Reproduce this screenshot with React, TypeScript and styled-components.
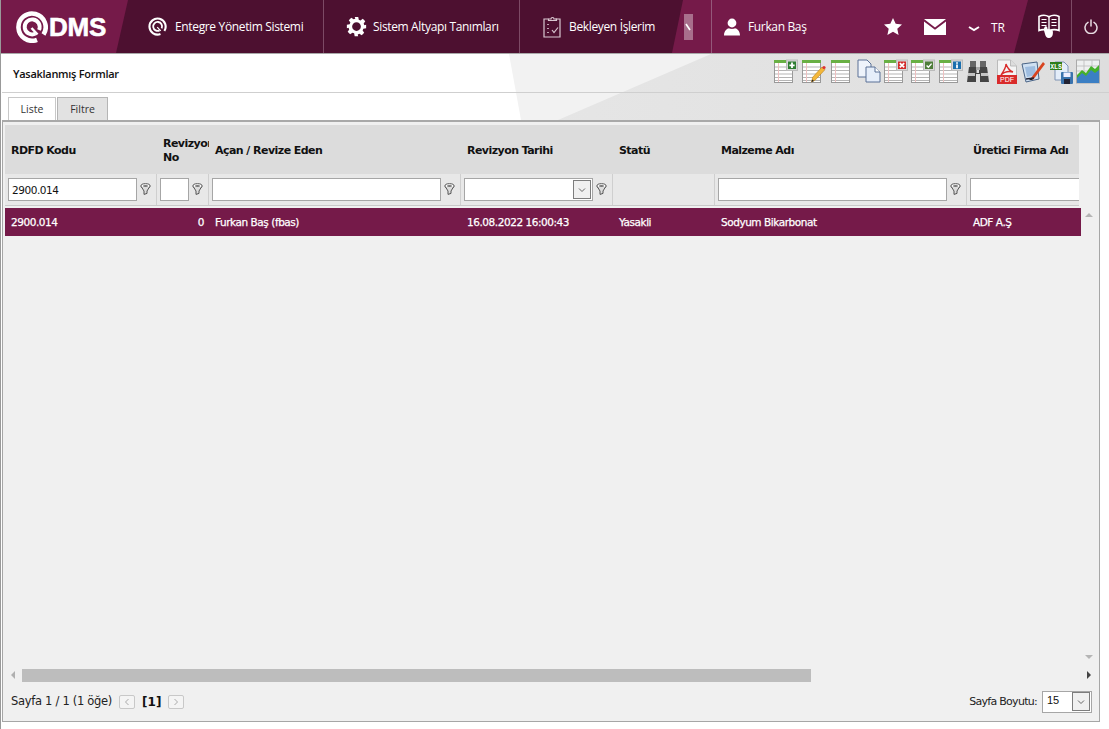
import React from "react";
import styled, { createGlobalStyle } from "styled-components";

const Global = createGlobalStyle`
  html, body { margin: 0; padding: 0; background: #fff; }
  body { width: 1109px; height: 729px; overflow: hidden; font-family: "Open Sans", "Noto Sans", sans-serif; }
  * { box-sizing: border-box; }
`;

const Page = styled.div`
  width: 1109px; height: 729px; display: flex; flex-direction: column;
  background: #fff; border-left: 1px solid #999;
`;

const Header = styled.header`
  height: 54px; flex: none; display: flex; background: #4d1030; border-bottom: 1px solid #a9a9a9;
`;
const LogoBlock = styled.div`
  width: 127px; flex: none; height: 100%; background: #751a49;
  clip-path: polygon(0 0, 100% 0, 115px 100%, 0 100%);
  display: flex; align-items: center; padding-left: 15px; gap: 1px;
`;
const LogoText = styled.span`
  font: 700 26px/1 "Liberation Sans", Arial, sans-serif; color: #fff; letter-spacing: -0.2px; -webkit-text-stroke: 0.6px #fff; margin-top: 1px;
`;
const NavItem = styled.div<{ $w: number; $pad: number; $left: number; $line?: boolean }>`
  width: ${p => p.$w}px; flex: none; height: 100%; display: flex; align-items: center; gap: ${p => p.$pad}px;
  padding-left: ${p => p.$left}px; color: #fff; font-size: 12px; letter-spacing: -0.35px;
  border-right: ${p => (p.$line ? "1px solid #7d4a65" : "none")};
  white-space: nowrap;
`;
const UserBlock = styled.div`
  width: 356px; flex: none; height: 100%; background: #751a49;
  clip-path: polygon(11px 0, 100% 0, 342px 100%, 0 100%);
  display: flex; align-items: center; position: relative;
`;
const Handle = styled.div`
  width: 9px; height: 26px; margin-left: 12px; background: #a86f8c; flex: none; display: flex; align-items: center; justify-content: center; overflow: hidden;
`;
const UserName = styled.div`
  width: 326px; margin-left: 18px; height: 100%; border-left: 1px solid #94587a; display: flex; align-items: center;
  padding-left: 12px; color: #fff; font-size: 12px; letter-spacing: -0.35px; white-space: nowrap;
`;
const NameText = styled.span`margin-left: 8px; width: 136px;`;
const Lang = styled.span`font-size: 12px; margin-left: 11px; margin-top: 2px; letter-spacing: 0;`;
const IconCell = styled.span<{ $ml: number; $mt?: number }>`
  display: inline-flex; margin-left: ${p => p.$ml}px; margin-top: ${p => p.$mt ?? 0}px;
`;
const HelpCell = styled.div`
  width: 44px; flex: none; height: 100%; border-right: 1px solid #7d4a65; display: flex; align-items: center; justify-content: flex-start; padding-left: 10px;
`;
const PowerCell = styled.div`
  flex: 1; height: 100%; display: flex; align-items: center; justify-content: center;
`;

const TopBand = styled.div`
  height: 66px; flex: none; position: relative; overflow: hidden; margin-left: 1px; background: #fff;
  &::before {
    content: ""; position: absolute; inset: 0; background: #f2f2f2;
    clip-path: polygon(507px 0, 100% 0, 100% 100%, 519px 100%);
  }
  &::after {
    content: ""; position: absolute; inset: 0; background: linear-gradient(90deg, #ededed, #dedede);
    clip-path: polygon(709px 0, 100% 0, 100% 100%, 556px 100%);
  }
`;
const TitleBar = styled.div`
  position: relative; z-index: 1; height: 39px; border-bottom: 1px solid #cfcfcf; display: flex; align-items: center; justify-content: space-between;
  padding: 0 9px 0 11px;
`;
const Title = styled.h1`
  margin: 0; font-size: 11px; font-weight: 600; color: #111; letter-spacing: -0.28px;
`;
const Tools = styled.div`
  display: flex; align-items: center; margin-top: -3px;
`;
const Tool = styled.span<{ $ml: number }>`
  display: inline-flex; margin-left: ${p => p.$ml}px;
`;
const Tabs = styled.div`
  position: relative; z-index: 1; height: 27px; display: flex; align-items: flex-end; gap: 1px; padding-left: 6px;
`;
const Tab = styled.div<{ $active?: boolean }>`
  height: 23px; width: ${p => (p.$active ? 48 : 51)}px; display: flex; align-items: center; justify-content: center; font-size: 10.5px; color: #333;
  background: ${p => (p.$active ? "#fff" : "#e2e2e2")}; border: 1px solid ${p => (p.$active ? "#c8c8c8" : "#b5b5b5")}; border-bottom: 0;
`;

const Panel = styled.main`
  width: 1098px; height: 602px; margin-left: 1px; flex: none; background: #f0f0f0; border: 1px solid #a6a6a6; border-top: 2px solid #a9a9a9;
  position: relative; display: flex; flex-direction: column; padding: 3px 0 0 2px;
`;
const GridWrap = styled.div`flex: 1; position: relative; overflow: hidden; min-height: 0;`;
const COLS = "152px 52px 252px 152px 102px 252px 152px";
const HeadRow = styled.div`
  width: 1074px; height: 49px; overflow: hidden; display: grid; grid-template-columns: ${COLS}; background: #dcdcdc;
`;
const HeadCell = styled.div`
  display: flex; align-items: center; padding: 2px 0 0 6px; font: 700 11px/14px "DejaVu Sans", Verdana, sans-serif; letter-spacing: -0.55px; color: #111; overflow: hidden; white-space: pre-line;
`;
const FilterRow = styled.div`
  width: 1074px; height: 32px; overflow: hidden; display: grid; grid-template-columns: ${COLS}; background: #e8e8e8; border-bottom: 1px solid #c9c9c9;
`;
const FilterCell = styled.div`
  display: flex; align-items: center; gap: 3px; padding: 0 3px; border-right: 1px solid #cfcfcf; height: 31px;
`;
const Field = styled.div<{ $w: number }>`
  width: ${p => p.$w}px; flex: none; height: 23px; background: #fff; border: 1px solid #a6a6a6; font: 400 10.5px/21px "DejaVu Sans", sans-serif; letter-spacing: -0.45px; color: #111; padding-left: 3px;
  display: flex; align-items: center; justify-content: flex-end;
`;
const FieldValue = styled.span`flex: 1; padding-top: 2px;`;
const DropBtn = styled.span`
  width: 18px; height: 19px; margin-right: 1px; background: #f0f0f0; border: 1px solid #7d7d7d; display: flex; align-items: center; justify-content: center; flex: none;
`;
const DataRow = styled.div`
  width: 1076px; height: 28px; margin-top: 2px; display: grid; grid-template-columns: ${COLS}; background: #751a49; color: #fff; overflow: hidden;
`;
const DataCell = styled.div<{ $right?: boolean }>`
  display: flex; align-items: center; justify-content: ${p => (p.$right ? "flex-end" : "flex-start")}; padding: 0 ${p => (p.$right ? 5 : 6)}px 0 6px;
  font: 400 10.5px/1 "DejaVu Sans", sans-serif; letter-spacing: -0.45px; white-space: nowrap; -webkit-text-stroke: 0.25px #fff;
`;
const Arrow = styled.span<{ $d: "u" | "d" | "l" | "r"; $top?: number; $left?: number }>`
  position: absolute; top: ${p => p.$top}px; left: ${p => p.$left}px; width: 0; height: 0;
  ${p => p.$d === "u" && "border-left:4px solid transparent;border-right:4px solid transparent;border-bottom:4px solid #b5b5b5;"}
  ${p => p.$d === "d" && "border-left:4px solid transparent;border-right:4px solid transparent;border-top:4px solid #b5b5b5;"}
  ${p => p.$d === "l" && "border-top:4px solid transparent;border-bottom:4px solid transparent;border-right:4px solid #b0b0b0;"}
  ${p => p.$d === "r" && "border-top:4px solid transparent;border-bottom:4px solid transparent;border-left:4px solid #444;"}
`;
const ScrollThumb = styled.div`
  height: 13px; position: absolute; top: 544px; left: 17px; width: 789px; background: #bdbdbd;
`;
const Footer = styled.footer`
  height: 39px; flex: none; display: flex; align-items: center; padding: 0 7px 0 6px; font: 400 11px/1 "DejaVu Sans", sans-serif; letter-spacing: -0.15px; color: #222;
`;
const Pager = styled.span`
  width: 16px; height: 14px; background: #f4f4f4; border: 1px solid #c8c8c8; border-radius: 2px; display: inline-flex; align-items: center; justify-content: center; flex: none;
`;
const Current = styled.b`font: 700 12px/1 "DejaVu Sans", sans-serif; color: #111; margin: 0 6.5px 0 7px; letter-spacing: 0;`;
const FooterSpacer = styled.div`flex: 1;`;
const PageInfo = styled.span`margin-right: 7px; font-size: 11.5px; letter-spacing: -0.3px;`;
const SizeLabel = styled.span`margin-right: 5px; letter-spacing: -0.72px;`;
const SizeBox = styled.div`
  width: 50px; height: 22px; background: #fff; border: 1px solid #a6a6a6; display: flex; align-items: center; justify-content: space-between; padding: 0 0 0 4px; font-family: "Liberation Sans", sans-serif; font-size: 11px; color: #111;
`;
const SizeValue = styled.span`margin-top: -3px;`;

const Chevron = ({ d = "down" }: { d?: "down" | "left" | "right" }) => (
  <svg width="10" height="10" viewBox="0 0 10 10" fill="none" stroke={d === "down" ? "#666" : "#aaa"} strokeWidth="1">
    {d === "down" && <path d="M2 3.5 5 6.5 8 3.5" />}
    {d === "left" && <path d="M6.5 2 3.5 5 6.5 8" />}
    {d === "right" && <path d="M3.5 2 6.5 5 3.5 8" />}
  </svg>
);

const Funnel = () => (
  <svg width="11" height="13" viewBox="0 0 11 13" style={{ flex: "none" }}>
    <ellipse cx="5.5" cy="3" rx="4.6" ry="2.3" fill="#fff" stroke="#555" strokeWidth="1" />
    <path d="M1.4 3.8 4 8v3.4l3-1V8l2.6-4.2" fill="#ddd" stroke="#555" strokeWidth="1" />
    <ellipse cx="5.5" cy="3" rx="2.6" ry="1" fill="#777" />
  </svg>
);

const QMark = ({ size, sw }: { size: number; sw: number }) => (
  <svg width={size} height={size} viewBox="0 0 32 32" fill="none" stroke="#fff" strokeLinecap="butt">
    <path d="M21 28.8 A13.6 13.6 0 1 1 27.5 23.5" strokeWidth={sw} />
    <path d="M19.5 22.6 A7.5 7.5 0 1 1 23 19" strokeWidth={sw * 0.85} />
    <path d="M15.5 17 L21.5 23.5" strokeWidth={sw * 0.55} />
  </svg>
);

const Gear = () => (
  <svg width="21" height="21" viewBox="0 0 24 24" fill="#fff">
    <path fillRule="evenodd" d="M10 1h4l.6 3.2 1.9.8 2.7-1.8 2.8 2.8-1.8 2.7.8 1.9L23 10v4l-3.2.6-.8 1.9 1.8 2.7-2.8 2.8-2.7-1.8-1.9.8L13.9 23h-4l-.6-3.2-1.9-.8-2.7 1.8-2.8-2.8 1.8-2.7-.8-1.9L1 14v-4l3.2-.6.8-1.9L3.2 4.8 6 2l2.7 1.8 1.9-.8L10 1Zm2 6a5 5 0 1 0 0 10 5 5 0 0 0 0-10Z" />
  </svg>
);

const Clipboard = () => (
  <svg width="19" height="22" viewBox="0 0 19 22" fill="none" stroke="#d9c8d1" strokeWidth="1.2">
    <path d="M5.5 3H1v18h16V3h-4.5" />
    <path d="M5.5 4.5V3H8a1.5 1.5 0 0 1 3 0h2.5v1.5z" />
    <path d="M5 8v1M5 12v1M5 16v1" strokeWidth="1.6" />
    <path d="m9 14 2 2.5 4-5" />
  </svg>
);

const Person = () => (
  <svg width="16" height="18" viewBox="0 0 16 18" fill="#fff">
    <circle cx="8" cy="5" r="4.4" />
    <path d="M0 17.5c0-4.6 3-7 5-7.2 1 .8 5 .8 6 0 2 .2 5 2.6 5 7.2z" />
  </svg>
);

const Star = () => (
  <svg width="18" height="17" viewBox="0 0 18 17" fill="#fff">
    <path d="M9 0l2.7 5.8 6.3.7-4.7 4.2 1.3 6.3L9 13.8 3.4 17l1.3-6.3L0 6.5l6.3-.7z" />
  </svg>
);

const Mail = () => (
  <svg width="22" height="16" viewBox="0 0 22 16" fill="#fff">
    <path d="M0 0h22L11 8.5z" />
    <path d="M0 2.4V16h22V2.4l-11 8.4z" />
  </svg>
);

const Book = () => (
  <svg width="24" height="25" viewBox="0 0 24 25">
    <path d="M1 2.5c3-1.6 7-1.6 10 .2 3-1.8 7-1.8 10-.2v14c-3-1.2-7-1-10 .3-3-1.3-7-1.5-10-.3z" fill="#4d1030" stroke="#fff" strokeWidth="1.6" />
    <path d="M11 3v13" stroke="#fff" strokeWidth="1.4" />
    <path d="M3.5 5.5h5M3.5 8.5h5M3.5 11.5h5M13.5 5.5h5M13.5 8.5h5M13.5 11.5h5" stroke="#fff" strokeWidth="1.2" />
    <path d="M7 12.5c1-.8 2 0 2.3 1l.4 2 1-.4 1 .3 1 .1 1.4.6c1 .6 1 3 .6 4.6-.4 2-2 3.6-4 3.3-2-.2-3-1.6-3.4-3L6 16.5c-.3-1.4.3-3.4 1-4z" fill="#fff" />
  </svg>
);

const Power = () => (
  <svg width="14" height="15" viewBox="0 0 14 15" fill="none" stroke="#e8dde3" strokeWidth="1.5" strokeLinecap="round">
    <path d="M4 3.4a6 6 0 1 0 6 0" />
    <path d="M7 1v6" />
  </svg>
);

type Badge = "plus" | "x" | "check" | "info";
const BADGE: Record<Badge, string> = { plus: "#2f7d32", x: "#d32b2b", check: "#4e7d3a", info: "#1b6fae" };

const FormIcon = ({ badge, pencil }: { badge?: Badge; pencil?: boolean }) => (
  <svg width="24" height="25" viewBox="0 0 24 25">
    <rect x="0.5" y="1.5" width="18" height="22" fill="#fff" stroke="#999" />
    <rect x="0" y="1" width="19" height="3" fill="#69b044" />
    <path d="M1 8h17M1 11.5h17M1 15h17M1 18.5h17M1 21.5h17" stroke="#b5b5b5" strokeWidth="1" />
    <path d="M4.5 4v19" stroke="#eec0c0" strokeWidth="1" />
    {badge && <rect x="12.5" y="1" width="11" height="10.5" fill="#d8d8d8" stroke="#bbb" />}
    {badge && <rect x="14" y="2.5" width="8" height="7.5" fill={BADGE[badge]} />}
    {badge === "plus" && <path d="M18 3.6v5.4M15.4 6.3h5.2" stroke="#fff" strokeWidth="1.8" />}
    {badge === "x" && <path d="M15.8 4.2l4.4 4.2M20.2 4.2l-4.4 4.2" stroke="#fff" strokeWidth="1.8" />}
    {badge === "check" && <path d="M15.6 6.4l1.8 1.8 3.2-3.6" stroke="#fff" strokeWidth="1.4" fill="none" />}
    {badge === "info" && <path d="M18 3.3v1.4M18 5.6v3.6" stroke="#fff" strokeWidth="1.8" />}
    {pencil && <path d="M9.5 23l1.2-4.8L20 8l3 2.6-9.8 10.5z" fill="#f3b73a" stroke="#b97d16" strokeWidth="0.6" />}
    {pencil && <path d="M9.5 23l.6-2.6 2 1.6z" fill="#222" />}
    {pencil && <circle cx="22" cy="8.5" r="1.6" fill="#d33" />}
  </svg>
);

const CopyIcon = () => (
  <svg width="24" height="25" viewBox="0 0 24 25">
    <path d="M1 1h9l4 4v13H1z" fill="#eef3fb" stroke="#5a7196" />
    <path d="M9 8h9l5 5v10H9z" fill="#e6eefa" stroke="#5a7196" />
    <path d="M18 8v5h5" fill="#fff" stroke="#5a7196" />
  </svg>
);

const Binoculars = () => (
  <svg width="22" height="25" viewBox="0 0 22 25">
    <rect x="3" y="2" width="6" height="6" fill="#666" />
    <rect x="13" y="2" width="6" height="6" fill="#666" />
    <path d="M2 8h7.5v6H12V8h8l2 15h-9V15H9v8H0z" fill="#444" />
    <rect x="1" y="14" width="7" height="3" fill="#c4c4c4" />
    <rect x="14" y="14" width="7" height="3" fill="#c4c4c4" />
    <rect x="9" y="8" width="4" height="3" fill="#aaa" />
  </svg>
);

const Pdf = () => (
  <svg width="20" height="25" viewBox="0 0 20 25">
    <path d="M.5 1h13L19.5 7v17H.5z" fill="#f4f4f4" stroke="#bbb" />
    <path d="M13.5 1v6h6" fill="#ddd" stroke="#bbb" />
    <path d="M9 5c1 3 2 6 7 8-4-1-9 0-12 3 2-3 5-7 5-11z" fill="none" stroke="#d92b2b" strokeWidth="1.4" />
    <rect x="0" y="16" width="20" height="9" fill="#d92b2b" />
    <text x="10" y="23.2" textAnchor="middle" fontFamily="Liberation Sans" fontSize="7" fill="#fff">PDF</text>
  </svg>
);

const Sign = () => (
  <svg width="24" height="25" viewBox="0 0 24 25">
    <path d="M1 5l15-2 2 17-13 3z" fill="#cfe0f2" stroke="#4a6486" />
    <path d="M4 8l10-1 1 9-9 2z" fill="#9fbde0" />
    <path d="M10 19L22 3l2 2L12 21z" fill="#d8431f" />
    <path d="M8 21l2-2 2 2z" fill="#222" />
    <path d="M5 20l8-1" stroke="#223" strokeWidth="1.3" />
  </svg>
);

const XlsSave = () => (
  <svg width="24" height="25" viewBox="0 0 24 25">
    <path d="M5 3h9l4 4v14H5z" fill="#e4edf9" stroke="#7e93b4" />
    <rect x="0" y="3" width="12" height="8" fill="#2d7d1a" />
    <text x="6" y="9.6" textAnchor="middle" fontFamily="Liberation Mono" fontWeight="700" fontSize="6.5" fill="#fff">XLS</text>
    <rect x="11" y="13" width="12" height="12" rx="1" fill="#3a73ad" />
    <rect x="13.5" y="13.5" width="7" height="4.5" fill="#eef" />
    <rect x="14" y="20" width="6" height="5" fill="#223" />
  </svg>
);

const Chart = () => (
  <svg width="24" height="25" viewBox="0 0 24 25">
    <rect x="0.5" y="1" width="23" height="23" fill="#eef0f0" stroke="#aaa" />
    <path d="M1 7h22M1 12h22M8 1v22M16 1v22" stroke="#bbb" strokeWidth="0.8" />
    <path d="M1 17l5-4 4 3 5-6 4 3 4-4v15H1z" fill="#3b7fc4" />
    <path d="M1 16l5-5 4 3 5-7 4 3 4-4v5l-4 3-4-3-5 6-4-3-5 5z" fill="#45b02a" />
  </svg>
);

export default function App() {
  return (
    <>
      <Global />
      <Page>
        <Header>
          <LogoBlock>
            <QMark size={32} sw={4.6} />
            <LogoText>DMS</LogoText>
          </LogoBlock>
          <NavItem $w={196} $pad={8} $left={20} $line>
            <QMark size={19} sw={3.6} />
            Entegre Yönetim Sistemi
          </NavItem>
          <NavItem $w={196} $pad={6} $left={22} $line>
            <Gear />
            Sistem Altyapı Tanımları
          </NavItem>
          <NavItem $w={152} $pad={7} $left={23}>
            <Clipboard />
            Bekleyen İşlerim
          </NavItem>
          <UserBlock>
            <Handle>
              <svg width="9" height="12" viewBox="0 0 9 12"><path d="M2 3l4 6" stroke="#fff" strokeWidth="1.6" /></svg>
            </Handle>
            <UserName>
              <Person />
              <NameText>Furkan Baş</NameText>
              <IconCell $ml={0}><Star /></IconCell>
              <IconCell $ml={22}><Mail /></IconCell>
              <IconCell $ml={22} $mt={4}>
                <svg width="12" height="7" viewBox="0 0 12 7" fill="none" stroke="#fff" strokeWidth="2"><path d="M1 2l5 3 5-3" /></svg>
              </IconCell>
              <Lang>TR</Lang>
            </UserName>
          </UserBlock>
          <HelpCell><Book /></HelpCell>
          <PowerCell><Power /></PowerCell>
        </Header>

        <TopBand>
          <TitleBar>
            <Title>Yasaklanmış Formlar</Title>
            <Tools>
              <Tool $ml={0}><FormIcon badge="plus" /></Tool>
              <Tool $ml={4}><FormIcon pencil /></Tool>
              <Tool $ml={5}><FormIcon /></Tool>
              <Tool $ml={2}><CopyIcon /></Tool>
              <Tool $ml={3}><FormIcon badge="x" /></Tool>
              <Tool $ml={3}><FormIcon badge="check" /></Tool>
              <Tool $ml={4}><FormIcon badge="info" /></Tool>
              <Tool $ml={4}><Binoculars /></Tool>
              <Tool $ml={8}><Pdf /></Tool>
              <Tool $ml={4}><Sign /></Tool>
              <Tool $ml={5}><XlsSave /></Tool>
              <Tool $ml={2}><Chart /></Tool>
            </Tools>
          </TitleBar>
          <Tabs>
            <Tab $active>Liste</Tab>
            <Tab>Filtre</Tab>
          </Tabs>
        </TopBand>

        <Panel>
          <GridWrap>
            <HeadRow>
              <HeadCell>RDFD Kodu</HeadCell>
              <HeadCell>{"Revizyon\nNo"}</HeadCell>
              <HeadCell>Açan / Revize Eden</HeadCell>
              <HeadCell>Revizyon Tarihi</HeadCell>
              <HeadCell>Statü</HeadCell>
              <HeadCell>Malzeme Adı</HeadCell>
              <HeadCell>Üretici Firma Adı</HeadCell>
            </HeadRow>
            <FilterRow>
              <FilterCell><Field $w={129}><FieldValue>2900.014</FieldValue></Field><Funnel /></FilterCell>
              <FilterCell><Field $w={29} /><Funnel /></FilterCell>
              <FilterCell><Field $w={229} /><Funnel /></FilterCell>
              <FilterCell><Field $w={129}><DropBtn><Chevron /></DropBtn></Field><Funnel /></FilterCell>
              <FilterCell />
              <FilterCell><Field $w={229} /><Funnel /></FilterCell>
              <FilterCell><Field $w={129} /></FilterCell>
            </FilterRow>
            <DataRow>
              <DataCell>2900.014</DataCell>
              <DataCell $right>0</DataCell>
              <DataCell>Furkan Baş (fbas)</DataCell>
              <DataCell>16.08.2022 16:00:43</DataCell>
              <DataCell>Yasakli</DataCell>
              <DataCell>Sodyum Bikarbonat</DataCell>
              <DataCell>ADF A.Ş</DataCell>
            </DataRow>
            <Arrow $d="u" $top={88} $left={1080} />
            <Arrow $d="d" $top={530} $left={1080} />
            <Arrow $d="l" $top={546} $left={6} />
            <ScrollThumb />
            <Arrow $d="r" $top={546} $left={1082} />
          </GridWrap>
          <Footer>
            <PageInfo>Sayfa 1 / 1 (1 öğe)</PageInfo>
            <Pager><Chevron d="left" /></Pager>
            <Current>[1]</Current>
            <Pager><Chevron d="right" /></Pager>
            <FooterSpacer />
            <SizeLabel>Sayfa Boyutu:</SizeLabel>
            <SizeBox>
              <SizeValue>15</SizeValue>
              <DropBtn><Chevron /></DropBtn>
            </SizeBox>
          </Footer>
        </Panel>
      </Page>
    </>
  );
}
